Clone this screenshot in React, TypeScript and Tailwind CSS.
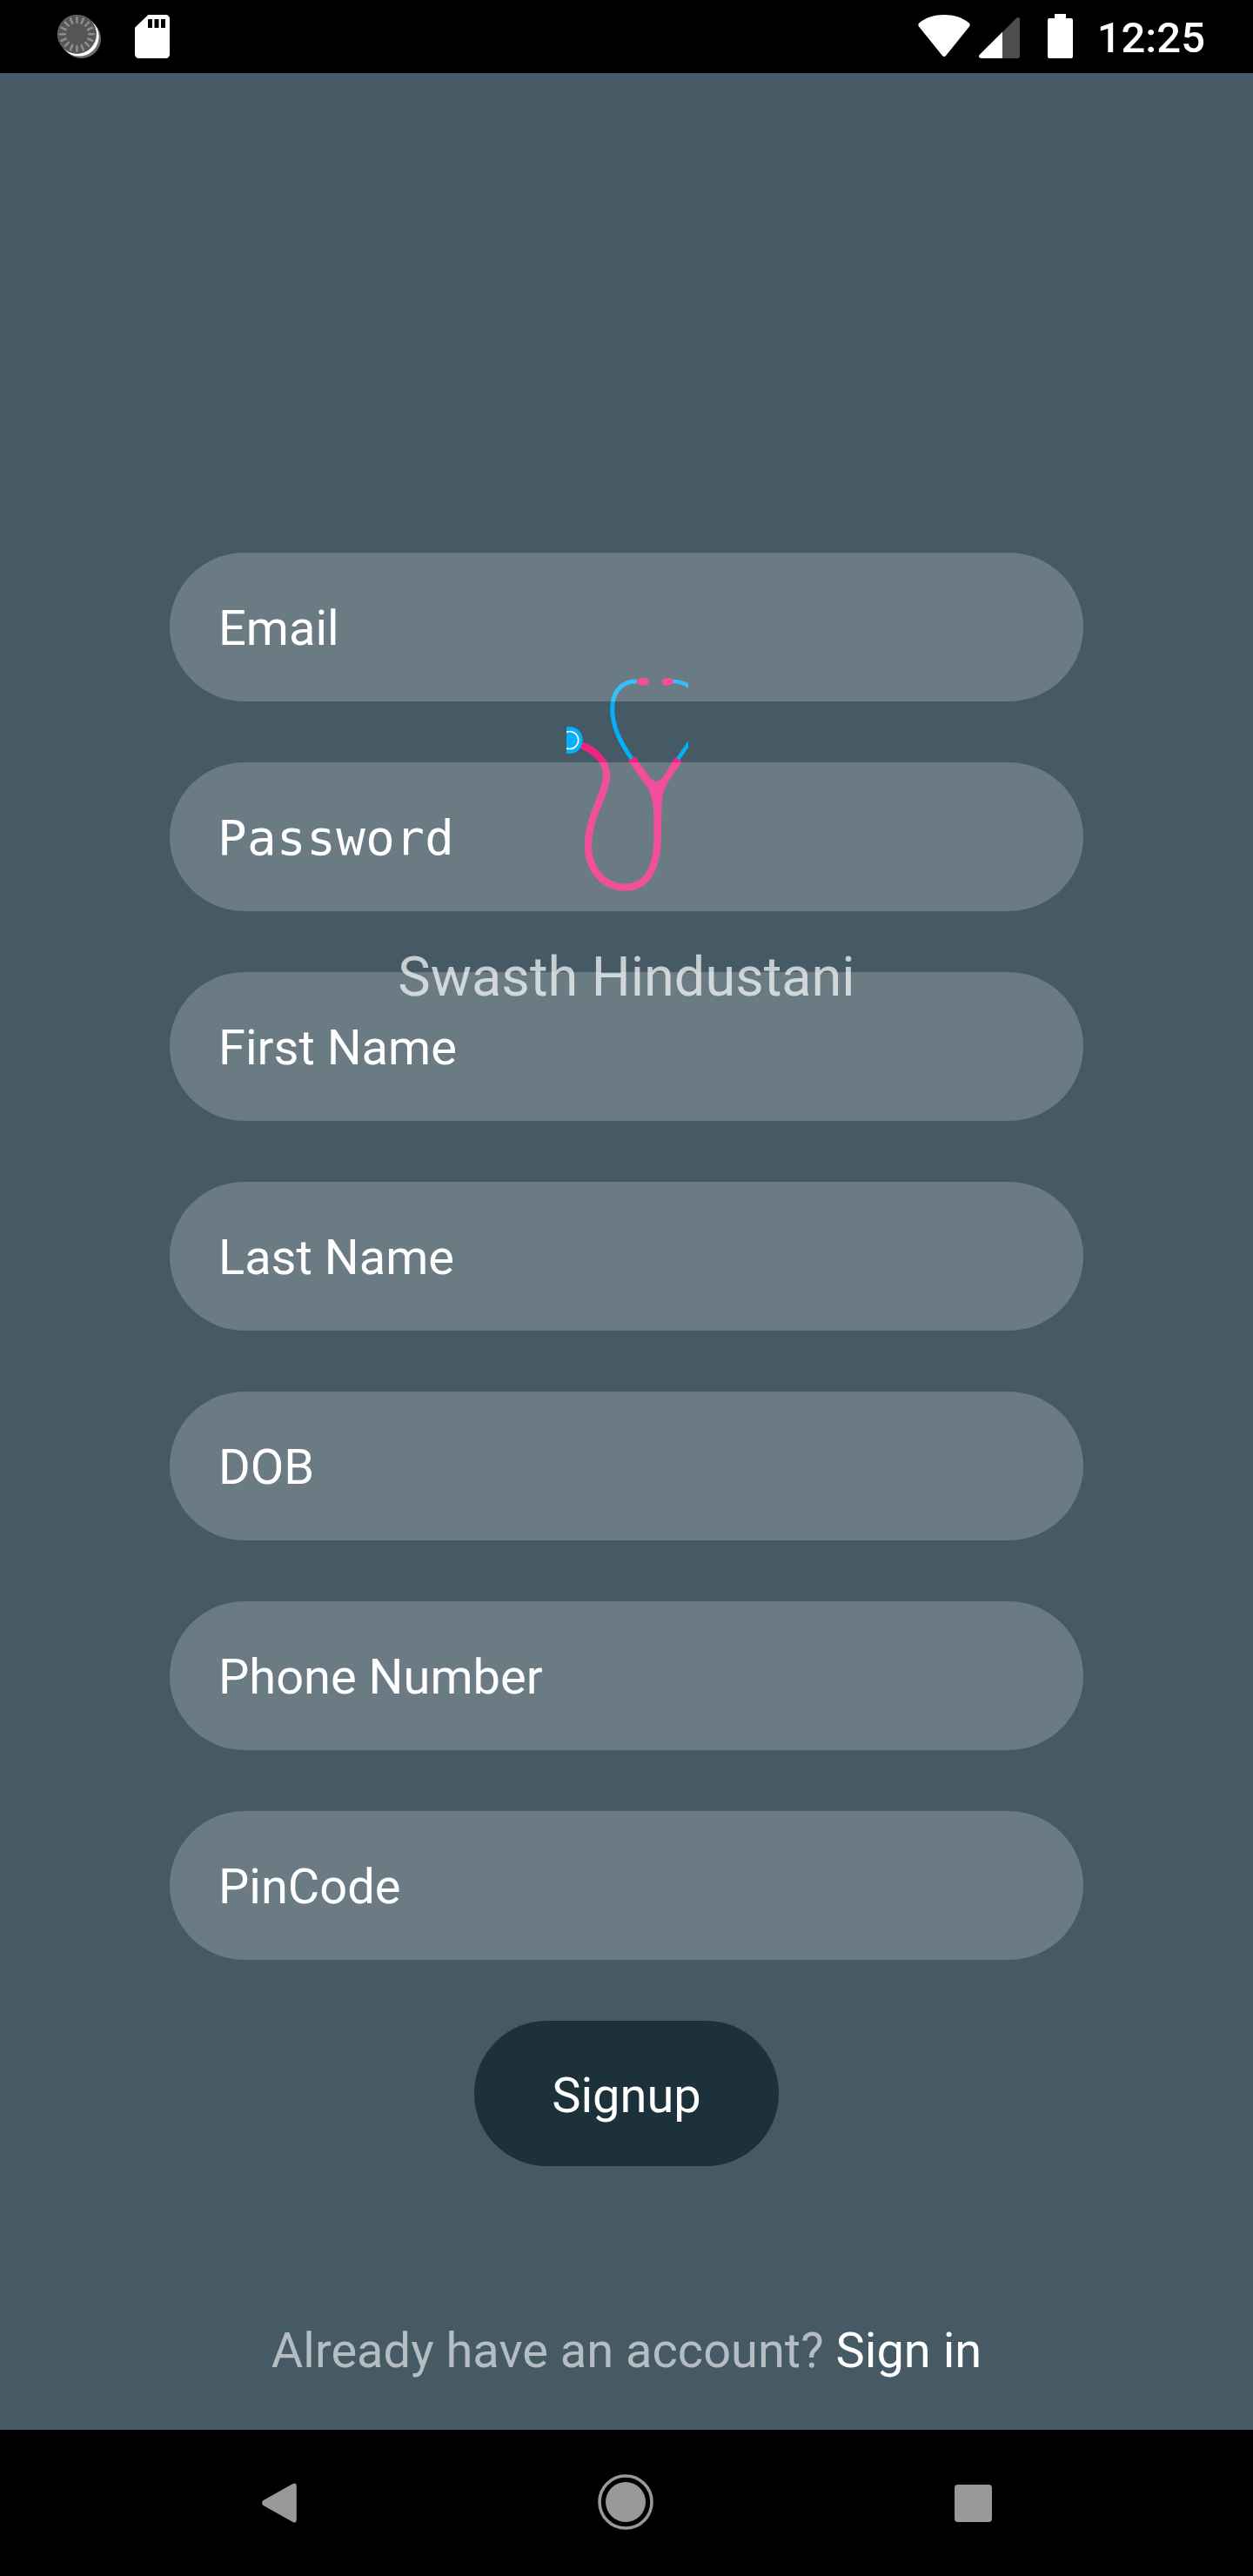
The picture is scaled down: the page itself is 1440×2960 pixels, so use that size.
const fields = [
  'Email',
  'Password',
  'First Name',
  'Last Name',
  'DOB',
  'Phone Number',
  'PinCode',
];

const ticks = Array.from({ length: 16 }, (_, i) => i * 22.5);

function StatusBar() {
  return (
    <header className="flex h-[84px] shrink-0 items-start justify-between bg-black pr-[55px] pl-[64px]">
      <div className="flex">
        <svg className="h-[84px] w-[56px]" viewBox="0 0 56 84">
          <circle cx="29.5" cy="44.5" r="22.5" fill="#6b6b6b" />
          <circle cx="27" cy="42" r="22.6" fill="#fff" />
          <circle cx="24.4" cy="39.3" r="22.4" fill="#555" />
          <circle cx="24.4" cy="39.3" r="22" fill="none" stroke="#6a6a6a" strokeWidth="0.8" />
          {ticks.map((a) => (
            <path
              key={a}
              d="M24.4 20v5.6"
              stroke="#8c8c8c"
              strokeWidth="2.6"
              strokeLinecap="round"
              transform={`rotate(${a} 24.4 39.3)`}
            />
          ))}
        </svg>
        <svg className="ml-[35px] h-[84px] w-[40px]" viewBox="0 0 40 84">
          <path
            fill="#fff"
            d="M15.3 17H35.5a4.5 4.5 0 0 1 4.5 4.5V62.500a4.500 4.500 0 0 1-4.500 4.500H4.500A4.500 4.500 0 0 1 0 62.500V31.700z"
          />
          <path fill="#000" d="M15 22h5v10h-5zM22.500 22h5v10h-5zM30 22h5v10h-5z" />
        </svg>
      </div>
      <div className="flex">
        <svg className="h-[84px] w-[60px]" viewBox="0 0 60 84">
          <path
            fill="#fff"
            d="M1.200 30.800Q-.8 28.400 1.500 26.200C9 20 19 17 30 17s21 3 28.500 9.200Q60.800 28.400 58.800 30.800L32 64Q30 66.300 28 64z"
          />
        </svg>
        <svg className="ml-[10px] h-[84px] w-[47px]" viewBox="0 0 47 84">
          <path fill="#4d4d4d" d="M27 37 43.200 20.800Q47 18.500 47 23V64.500Q47 67 44.500 67H27z" />
          <path fill="#fff" d="M27 36.700V67H2.500Q-1.200 66.500.6 63z" />
        </svg>
        <svg className="ml-[32px] h-[84px] w-[29px]" viewBox="0 0 29 84">
          <path
            fill="#fff"
            d="M8 16h13v5h6q2 0 2 2v42q0 2-2 2H2q-2 0-2-2V23q0-2 2-2h6z"
          />
        </svg>
        <span className="ml-[28px] pt-[15px] text-[49px] leading-[58px] font-medium text-white">
          12:25
        </span>
      </div>
    </header>
  );
}

function Stethoscope() {
  return (
    <svg className="ml-[2px] h-[280px] w-[140px]" viewBox="63 0 420 840" fill="none">
      <path
        d="M306 68C250 68 221 108 221 165C221 225 252 286 290 338"
        stroke="#03b0fb"
        strokeWidth="15"
      />
      <path d="M430 69C456 69 474 76 492 90M492 272 447 337" stroke="#03b0fb" strokeWidth="14" />
      <path
        d="M318 57H338Q346 58 346 70T338 83H325Q307 80 306 70Q306 62 318 57zM398 59Q404 57 420 57Q432 60 432 69T420 80L404 84Q390 82 393 70Q388 66 398 59z"
        fill="#ee2483"
      />
      <circle cx="73" cy="271.500" r="46.500" fill="#03b0fb" />
      <circle cx="74" cy="271.500" r="30" stroke="#fff" strokeWidth="5" />
      <path
        d="M115 289C165 309 201 345 201 392C201 460 138 530 138 635C138 715 190 779 264 779C340 779 377 715 377 600V470"
        stroke="#ee2483"
        strokeWidth="25"
      />
      <path
        d="M276 342 300 328 340 385Q372 440 402 389L437 330 461 345 410 422Q390 455 392 500L389.500 600H365C365 530 364 480 347 442Z"
        fill="#ee2483"
      />
    </svg>
  );
}

function NavBar() {
  return (
    <nav className="flex h-[168px] shrink-0 items-center justify-between bg-black pr-[300px] pl-[301px]">
      <svg className="h-[46px] w-[40px]" viewBox="0 0 40 46">
        <path fill="#999" d="M1.300 20.300 35.500 1.100Q39.800-.8 39.800 4V42Q39.800 46.800 35.500 44.900L1.300 25.700Q-1 23 1.300 20.300z" />
      </svg>
      <svg className="mt-[-2px] h-[64px] w-[64px]" viewBox="0 0 64 64">
        <circle cx="32" cy="32" r="30" fill="none" stroke="#999" strokeWidth="3.600" />
        <circle cx="32" cy="32" r="23" fill="#999" />
      </svg>
      <div className="h-[43px] w-[43px] rounded-[4px] bg-[#999]" />
    </nav>
  );
}

export default function App() {
  return (
    <div className="flex h-[2960px] w-[1440px] flex-col overflow-hidden bg-[#455a64] font-['Roboto',sans-serif]">
      <StatusBar />
      <main className="grid h-[2708px] shrink-0 grid-cols-1 grid-rows-1">
        <div className="col-start-1 row-start-1 flex flex-col items-center pt-[676px]">
          <Stethoscope />
          <h1 className="mt-[46px] text-[63px] leading-[74px] font-normal text-white/70">
            Swasth Hindustani
          </h1>
        </div>
        <div className="z-10 col-start-1 row-start-1 flex flex-col items-center pt-[551px]">
          <form className="flex flex-col items-center gap-[70px]">
            {fields.map((name) => (
              <input
                key={name}
                placeholder={name}
                className={
                  name === 'Password'
                    ? "h-[171px] w-[1050px] rounded-full bg-white/20 px-[55px] pt-[2px] font-['DejaVu_Sans_Mono',monospace] text-[55.800px] tracking-[0.450px] text-white outline-none placeholder:text-white"
                    : 'h-[171px] w-[1050px] rounded-full bg-white/20 px-[56px] pt-[3px] text-[56px] text-white outline-none placeholder:text-white'
                }
              />
            ))}
            <button
              type="button"
              className="h-[167px] w-[350px] rounded-full bg-[#1c313a] pt-[5px] text-[56px] text-white"
            >
              Signup
            </button>
          </form>
          <p className="mt-[179px] text-[56px] leading-[66px] whitespace-pre text-white/60">
            Already have an account? <a className="text-white">Sign in</a>
          </p>
        </div>
      </main>
      <NavBar />
    </div>
  );
}
